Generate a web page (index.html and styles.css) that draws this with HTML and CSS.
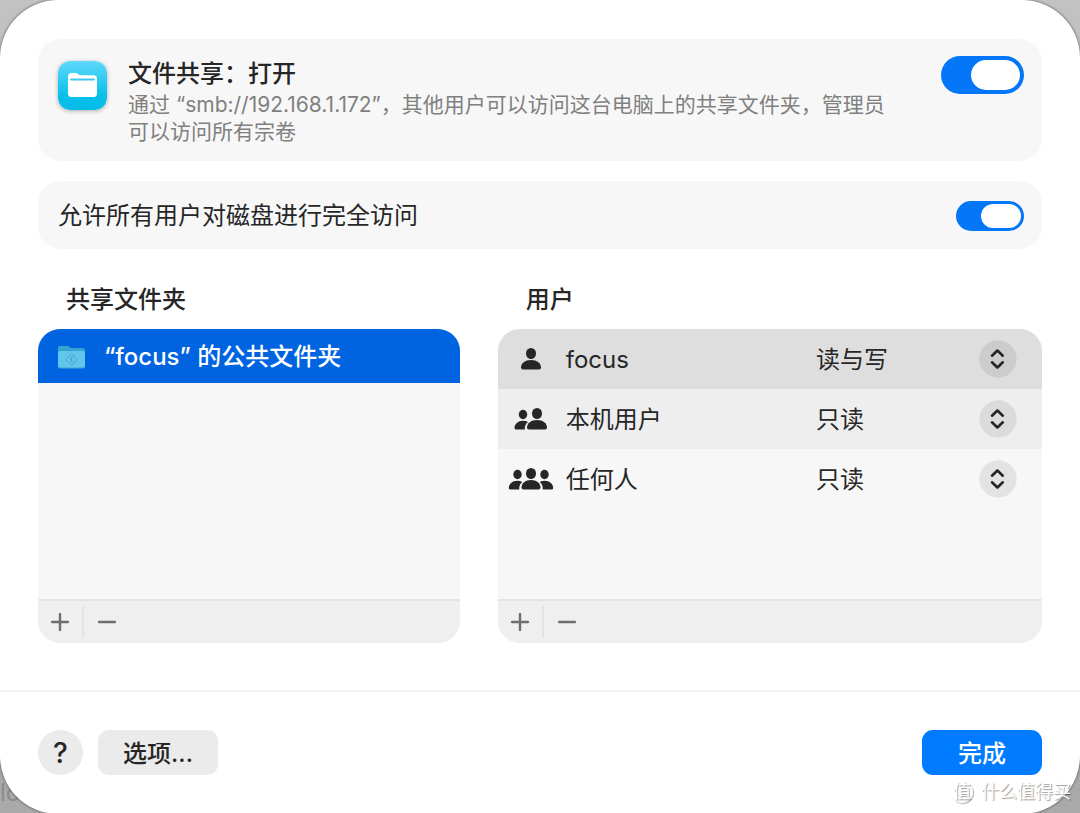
FILE: index.html
```html
<!DOCTYPE html>
<html lang="zh-CN">
  <head>
    <meta charset="UTF-8" />
    <meta name="viewport" content="width=device-width, initial-scale=1.0" />
    <title>文件共享</title>
    <link rel="stylesheet" href="styles.css">
  </head>
  <body>
    <span class="backdrop-text">lo</span>
    <div class="dialog">
      <main class="content">
        <!-- File sharing status -->
        <section class="card card-sharing">
          <svg class="app-icon" viewBox="0 0 49 49" aria-hidden="true">
            <defs>
              <linearGradient id="icon-bg" x1="0" y1="0" x2="0" y2="1">
                <stop offset="0" stop-color="#5fd8fa" />
                <stop offset="0.7" stop-color="#08c0ea" />
                <stop offset="1" stop-color="#06bbe8" />
              </linearGradient>
            </defs>
            <rect width="49" height="49" rx="12" fill="url(#icon-bg)" />
            <path d="M10 16q0-4 3.500-4h4q1.500 0 2.500 1t2.500 1.300h13q3.500 0 3.500 3.500v14.700q0 3.500-3.500 3.500h-22q-3.500 0-3.500-3.500z" fill="#fff" />
            <path d="M13 18.500h23" stroke="#3bc9ee" stroke-width="1.800" stroke-linecap="round" />
          </svg>
          <div class="card-text">
            <label for="file-sharing" class="card-title">文件共享：打开</label>
            <p class="card-desc">通过 “smb://192.168.1.172”，其他用户可以访问这台电脑上的共享文件夹，管理员可以访问所有宗卷</p>
          </div>
          <input type="checkbox" role="switch" id="file-sharing" class="switch switch-large" checked />
        </section>

        <!-- Full disk access -->
        <section class="card card-access">
          <label for="disk-access" class="access-label">允许所有用户对磁盘进行完全访问</label>
          <input type="checkbox" role="switch" id="disk-access" class="switch" checked />
        </section>

        <div class="lists">
          <section class="list">
            <h2>共享文件夹</h2>
            <div class="panel">
              <ul class="folders">
                <li class="folder selected">
                  <svg class="folder-icon" viewBox="0 0 28 24" aria-hidden="true">
                    <path d="M1 3q0-2 2-2h7q1.500 0 2.500 1t2.500 1h10q3 0 3 3v6h-27z" fill="#35a5d0" />
                    <rect x="1" y="6" width="27" height="17" rx="2" fill="#62c5ec" />
                    <path d="M1 21.500q0 1.500 2 1.500h23q2 0 2-1.500" fill="none" stroke="#3ba7d2" />
                    <path d="M14.500 8.500l6 6-6 6-6-6z" fill="none" stroke="#45a8d2" stroke-linejoin="round" />
                    <path d="M16.500 12l-3.500 2.500 3.500 2.500M14.500 11.500v6" fill="none" stroke="#45a8d2" />
                  </svg>
                  <span>“focus” 的公共文件夹</span>
                </li>
              </ul>
              <div class="panel-bar">
                <button type="button" class="bar-btn" aria-label="添加文件夹">
                  <svg viewBox="0 0 18 18"><path d="M9 1v16M1 9h16" /></svg>
                </button>
                <button type="button" class="bar-btn" aria-label="移除文件夹">
                  <svg viewBox="0 0 18 18"><path d="M1 9h16" /></svg>
                </button>
              </div>
            </div>
          </section>

          <section class="list">
            <h2>用户</h2>
            <div class="panel">
              <table class="users">
                <tbody>
                  <tr class="row-selected">
                    <td class="user-icon">
                      <svg width="46" height="24" viewBox="0 0 46 24" aria-hidden="true">
                        <ellipse cx="23" cy="6.500" rx="5" ry="5.500" />
                        <path d="M13 20.500c0-4 4-7.500 10-7.500s10 3.500 10 7.500q0 2-2 2h-16q-2 0-2-2z" />
                      </svg>
                    </td>
                    <td class="user-name"><label for="perm-focus">focus</label></td>
                    <td class="user-perm">
                      <select id="perm-focus">
                        <option selected>读与写</option>
                        <option>只读</option>
                      </select>
                    </td>
                  </tr>
                  <tr class="row-alt">
                    <td class="user-icon">
                      <svg width="46" height="24" viewBox="0 0 46 24" aria-hidden="true">
                        <ellipse cx="15" cy="7.500" rx="4.200" ry="4.700" />
                        <path d="M6.500 21c0-3.700 3.500-7.200 8.500-7.200q3 0 5 1.200c-2.500 2-3.500 4.500-3.200 7.500h-8.500q-1.800 0-1.800-1.500z" />
                        <ellipse cx="29" cy="6.500" rx="5" ry="5.500" />
                        <path d="M19 20.500c0-4 4-7.500 10-7.500s10 3.500 10 7.500q0 2-2 2h-16q-2 0-2-2z" />
                      </svg>
                    </td>
                    <td class="user-name"><label for="perm-local">本机用户</label></td>
                    <td class="user-perm">
                      <select id="perm-local">
                        <option>读与写</option>
                        <option selected>只读</option>
                      </select>
                    </td>
                  </tr>
                  <tr>
                    <td class="user-icon">
                      <svg width="46" height="24" viewBox="0 0 46 24" aria-hidden="true">
                        <ellipse cx="9.500" cy="7.500" rx="4.200" ry="4.700" />
                        <path d="M.800 21c0-3.700 3.500-7.200 8.500-7.200q3 0 5 1.200c-2.500 2-3.300 4.500-3 7.500h-8.700q-1.800 0-1.800-1.500z" />
                        <ellipse cx="36.500" cy="7.500" rx="4.200" ry="4.700" />
                        <path d="M45.200 21c0-3.700-3.500-7.200-8.500-7.200q-3 0-5 1.200c2.500 2 3.300 4.500 3 7.500h8.700q1.800 0 1.800-1.500z" />
                        <ellipse cx="23" cy="6.500" rx="5" ry="5.500" />
                        <path d="M13.500 20.500c0-4 3.800-7.500 9.500-7.500s9.500 3.500 9.500 7.500q0 2-2 2h-15q-2 0-2-2z" />
                      </svg>
                    </td>
                    <td class="user-name"><label for="perm-all">任何人</label></td>
                    <td class="user-perm">
                      <select id="perm-all">
                        <option>读与写</option>
                        <option selected>只读</option>
                      </select>
                    </td>
                  </tr>
                </tbody>
              </table>
              <div class="panel-bar">
                <button type="button" class="bar-btn" aria-label="添加用户">
                  <svg viewBox="0 0 18 18"><path d="M9 1v16M1 9h16" /></svg>
                </button>
                <button type="button" class="bar-btn" aria-label="移除用户">
                  <svg viewBox="0 0 18 18"><path d="M1 9h16" /></svg>
                </button>
              </div>
            </div>
          </section>
        </div>
      </main>

      <footer class="actions">
        <button type="button" class="btn-help" aria-label="帮助">?</button>
        <button type="button" class="btn">选项...</button>
        <button type="button" class="btn btn-primary">完成</button>
      </footer>
    </div>

    <div class="watermark"><span class="watermark-logo">值</span>什么值得买</div>
  </body>
</html>
```
FILE: styles.css
```css
* {
  box-sizing: border-box;
}
body {
  margin: 0;
  background: linear-gradient(#c2c2c2, #a9a9a9);
  color: #262626;
  font-family: Inter, "Noto Sans CJK SC", sans-serif;
  font-size: 24px;
  line-height: 32px;
}
button,
select {
  font: inherit;
  color: inherit;
  border: none;
  cursor: pointer;
}
.backdrop-text {
  position: absolute;
  left: 0;
  bottom: 4px;
  color: #8c8c8c;
}
.dialog {
  position: relative;
  display: flex;
  flex-direction: column;
  min-height: 100vh;
  background: #fff;
  border-radius: 58px;
  box-shadow: 0 0 3px rgba(0, 0, 0, 0.6);
}
.content {
  display: flex;
  flex-direction: column;
  flex: 1;
  gap: 20px;
  padding: 39px 38px 47px;
}

/* cards */
.card {
  display: flex;
  background: #f7f7f7;
  border-radius: 22px;
  padding: 0 18px 0 20px;
}
.card-sharing {
  align-items: flex-start;
  padding-top: 17px;
  padding-bottom: 16px;
}
.app-icon {
  flex: none;
  width: 49px;
  height: 49px;
  margin-top: 5px;
  margin-right: 21px;
  border-radius: 12px;
  box-shadow: 0 1px 4px rgba(0, 0, 0, 0.3);
}
.card-text {
  flex: 1;
  margin-right: 40px;
}
.card-title {
  display: block;
  font-weight: 500;
  line-height: 35px;
}
.card-desc {
  margin: 0;
  color: #808080;
  font-size: 21px;
  line-height: 27px;
}
.card-access {
  align-items: center;
  justify-content: space-between;
  min-height: 68px;
  padding-top: 2px;
}

/* switches */
.switch {
  appearance: none;
  display: flex;
  flex: none;
  width: 68px;
  height: 30px;
  margin: 0;
  padding: 3px;
  border-radius: 19px;
  background: #c8c8c8;
  cursor: pointer;
}
.switch::before {
  content: "";
  width: 40px;
  border-radius: 15px;
  background: #fff;
}
.switch:checked {
  justify-content: flex-end;
  background: #0477f8;
}
.switch-large {
  width: 83px;
  height: 38px;
  padding: 4px;
}
.switch-large::before {
  width: 49px;
}

/* folder and user lists */
.lists {
  display: grid;
  grid-template-columns: 31fr 40fr;
  gap: 38px;
  flex: 1;
  margin-top: 15px;
}
.list {
  display: flex;
  flex-direction: column;
}
h2 {
  margin: 0 0 13px 28px;
  font-size: 24px;
  font-weight: 500;
}
.panel {
  display: flex;
  flex-direction: column;
  flex: 1;
  min-height: 314px;
  overflow: hidden;
  background: #f7f7f7;
  border-radius: 22px;
}
.folders {
  margin: 0;
  padding: 0;
  list-style: none;
}
.folder {
  display: flex;
  align-items: center;
  gap: 19px;
  height: 54px;
  padding: 1px 19px 0;
}
.folder.selected {
  background: #0064e1;
  color: #fff;
  font-weight: 500;
}
.folder-icon {
  width: 28px;
  height: 24px;
}
.users {
  width: 100%;
  border-collapse: collapse;
}
.users tr {
  height: 60px;
}
.users td {
  padding: 0;
}
.row-selected {
  background: #dedede;
}
.row-alt {
  background: #eee;
}
.users .user-icon {
  width: 68px;
  padding-left: 10px;
}
.user-icon svg {
  display: block;
  fill: #262626;
}
.users .user-name {
  padding-top: 2px;
}
.users .user-perm {
  width: 226px;
  padding-right: 25px;
}
.user-perm select {
  appearance: none;
  display: block;
  width: 100%;
  height: 38px;
  padding: 2px 0 0;
  background: url("data:image/svg+xml,%3Csvg xmlns='http://www.w3.org/2000/svg' width='38' height='38' fill='none'%3E%3Ccircle cx='19' cy='19' r='18.700' fill='%23000' fill-opacity='.08'/%3E%3Cpath d='M13 15.700l5.400-5.200 5.400 5.200M13 22.300l5.400 5.200 5.400-5.200' stroke='%23262626' stroke-width='2.600' stroke-linecap='round' stroke-linejoin='round'/%3E%3C/svg%3E") no-repeat right center;
}
.panel-bar {
  display: flex;
  height: 44px;
  margin-top: auto;
  padding: 5px 0;
  border-top: 2px solid #e4e4e4;
  background: #efefef;
}
.bar-btn {
  display: flex;
  align-items: center;
  justify-content: center;
  width: 46px;
  padding: 0;
  background: none;
}
.bar-btn:first-child {
  border-right: 2px solid #e4e4e4;
}
.bar-btn svg {
  width: 18px;
  height: 18px;
  fill: none;
  stroke: #6e6e6e;
  stroke-width: 2.4;
  stroke-linecap: round;
}

/* bottom buttons */
.actions {
  display: flex;
  gap: 15px;
  padding: 38px 38px 39px;
  border-top: 2px solid #f1f1f1;
}
.btn,
.btn-help {
  height: 45px;
  padding: 0;
  background: #ebebeb;
  font-weight: 500;
}
.btn {
  min-width: 120px;
  padding-top: 2px;
  border-radius: 11px;
}
.btn-help {
  width: 45px;
  border-radius: 50%;
  font-size: 28px;
}
.btn-primary {
  margin-left: auto;
  background: #007aff;
  color: #fff;
}

.watermark {
  position: absolute;
  right: 9px;
  bottom: 9px;
  display: flex;
  align-items: center;
  gap: 8px;
  color: #fff;
  font-size: 18px;
  line-height: 24px;
  text-shadow: 1px 1px 1px rgba(0, 0, 0, 0.4);
}
.watermark-logo {
  width: 22px;
  height: 22px;
  border-radius: 50%;
  box-shadow: 1px 1px 1px rgba(0, 0, 0, 0.3);
  line-height: 22px;
  text-align: center;
}
```
